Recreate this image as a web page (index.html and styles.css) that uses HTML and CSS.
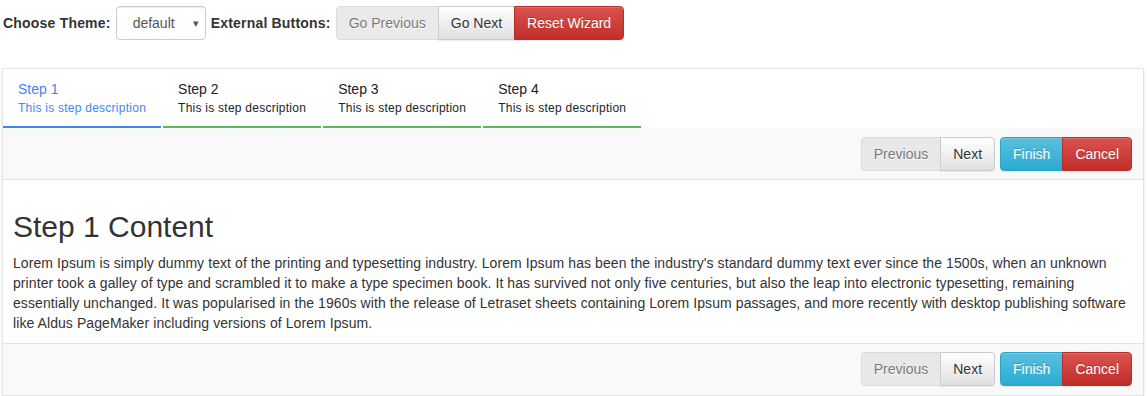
FILE: index.html
```html
<!DOCTYPE html>
<html lang="en">
<head>
    <meta charset="UTF-8">
    <meta name="viewport" content="width=device-width, initial-scale=1.0">
    <title>Smart Wizard - Default Theme</title>
    <link rel="stylesheet" href="styles.css">
</head>
<body>
    <div class="controls">
        <label class="ctl-label" for="theme_selector">Choose Theme:</label>
        <span class="select-wrap">
            <select id="theme_selector" class="theme-select">
                <option value="default">default</option>
                <option value="arrows">arrows</option>
                <option value="circles">circles</option>
                <option value="dots">dots</option>
            </select>
        </span>
        <label class="ctl-label">External Buttons:</label>
        <div class="btn-group">
            <button class="btn btn-default" disabled>Go Previous</button>
            <button class="btn btn-default">Go Next</button>
            <button class="btn btn-danger">Reset Wizard</button>
        </div>
    </div>

    <div class="wizard">
        <ul class="step-anchor">
            <li class="active"><a href="#step-1">Step 1<small>This is step description</small></a></li>
            <li class="done"><a href="#step-2">Step 2<small>This is step description</small></a></li>
            <li class="done"><a href="#step-3">Step 3<small>This is step description</small></a></li>
            <li class="done"><a href="#step-4">Step 4<small>This is step description</small></a></li>
        </ul>

        <div class="toolbar toolbar-top">
            <div class="btn-group">
                <button class="btn btn-default" disabled>Previous</button>
                <button class="btn btn-default">Next</button>
            </div>
            <div class="btn-group">
                <button class="btn btn-info">Finish</button>
                <button class="btn btn-danger">Cancel</button>
            </div>
        </div>

        <div class="step-content">
            <h2>Step 1 Content</h2>
            <p>Lorem Ipsum is simply dummy text of the printing and typesetting industry. Lorem Ipsum has been the industry's standard dummy text ever since the 1500s, when an unknown printer took a galley of type and scrambled it to make a type specimen book. It has survived not only five centuries, but also the leap into electronic typesetting, remaining<br>
            essentially unchanged. It was popularised in the 1960s with the release of Letraset sheets containing Lorem Ipsum passages, and more recently with desktop publishing software like Aldus PageMaker including versions of Lorem Ipsum.</p>
        </div>

        <div class="toolbar toolbar-bottom">
            <div class="btn-group">
                <button class="btn btn-default" disabled>Previous</button>
                <button class="btn btn-default">Next</button>
            </div>
            <div class="btn-group">
                <button class="btn btn-info">Finish</button>
                <button class="btn btn-danger">Cancel</button>
            </div>
        </div>
    </div>
</body>
</html>
```

FILE: styles.css
```css
* {
    box-sizing: border-box;
}
body {
    margin: 0;
    padding: 0 3px 0 2px;
    font-family: "Liberation Sans", Arial, Helvetica, sans-serif;
    font-size: 14px;
    line-height: 20px;
    color: #333;
    background-color: #fff;
}

/* top controls */
.controls {
    display: flex;
    align-items: center;
    gap: 5px;
    padding: 6px 0 0 1px;
    margin-bottom: 28px;
}
.ctl-label {
    font-weight: bold;
    color: #333;
    letter-spacing: 0.2px;
}
.select-wrap {
    position: relative;
    display: inline-block;
}
.theme-select {
    -webkit-appearance: none;
    appearance: none;
    width: 90px;
    height: 34px;
    padding: 6px 20px 6px 16px;
    font: inherit;
    color: #555;
    background-color: #fff;
    border: 1px solid #ccc;
    border-radius: 4px;
    box-shadow: inset 0 1px 1px rgba(0,0,0,0.075);
}
.select-wrap::after {
    content: "\25BE";
    position: absolute;
    right: 7px;
    top: 7px;
    font-size: 11px;
    color: #555;
    pointer-events: none;
}

/* buttons */
.btn-group {
    display: inline-flex;
}
.btn {
    height: 34px;
    padding: 6px 12px;
    font-family: inherit;
    font-size: 14px;
    line-height: 20px;
    border: 1px solid transparent;
    border-radius: 4px;
    cursor: pointer;
    box-shadow: inset 0 1px 0 rgba(255,255,255,0.15), 0 1px 1px rgba(0,0,0,0.075);
}
.btn-group .btn + .btn {
    margin-left: -1px;
}
.btn-group .btn:not(:first-child) {
    border-top-left-radius: 0;
    border-bottom-left-radius: 0;
}
.btn-group .btn:not(:last-child) {
    border-top-right-radius: 0;
    border-bottom-right-radius: 0;
}
.btn-default {
    color: #333;
    background-image: linear-gradient(#fff 0%, #e0e0e0 100%);
    border-color: #ccc;
    text-shadow: 0 1px 0 #fff;
}
.btn-default:disabled {
    background-image: none;
    background-color: #e0e0e0;
    opacity: 0.65;
    box-shadow: none;
    cursor: not-allowed;
}
.btn-info {
    color: #fff;
    background-image: linear-gradient(#5bc0de 0%, #2aabd2 100%);
    border-color: #28a4c9;
    text-shadow: 0 -1px 0 rgba(0,0,0,0.2);
}
.btn-danger {
    color: #fff;
    background-image: linear-gradient(#d9534f 0%, #c12e2a 100%);
    border-color: #b92c28;
    text-shadow: 0 -1px 0 rgba(0,0,0,0.2);
}

/* wizard */
.wizard {
    border: 1px solid #e4e4e4;
    box-shadow: 0 1px 3px rgba(0,0,0,0.1);
}
.step-anchor {
    display: flex;
    list-style: none;
    margin: 0;
    padding: 0;
}
.step-anchor li a {
    position: relative;
    display: block;
    margin-right: 2px;
    padding: 10px 15px 11px;
    color: #222;
    text-decoration: none;
}
.step-anchor li a small {
    display: block;
    font-size: 12px;
    line-height: 18px;
    letter-spacing: 0.25px;
}
.step-anchor li a::after {
    content: "";
    position: absolute;
    left: 0;
    bottom: 0;
    width: 100%;
    height: 2px;
    background: #5cb85c;
}
.step-anchor li.active a {
    color: #4285F4;
}
.step-anchor li.active a::after {
    background: #4285F4;
}

.toolbar {
    display: flex;
    justify-content: flex-end;
    gap: 5px;
    background-color: #f9f9f9;
}
.toolbar-top {
    padding: 9px 11px 8px 10px;
    border-bottom: 1px solid #e2e2e2;
}
.toolbar-bottom {
    padding: 8px 11px 9px 10px;
    border-top: 1px solid #e2e2e2;
}

.step-content {
    padding: 10px;
}
.step-content h2 {
    margin: 20px 0 10px;
    font-size: 30px;
    font-weight: 500;
    line-height: 33px;
    color: #333;
}
.step-content p {
    margin: 0;
    letter-spacing: 0.08px;
}
```
